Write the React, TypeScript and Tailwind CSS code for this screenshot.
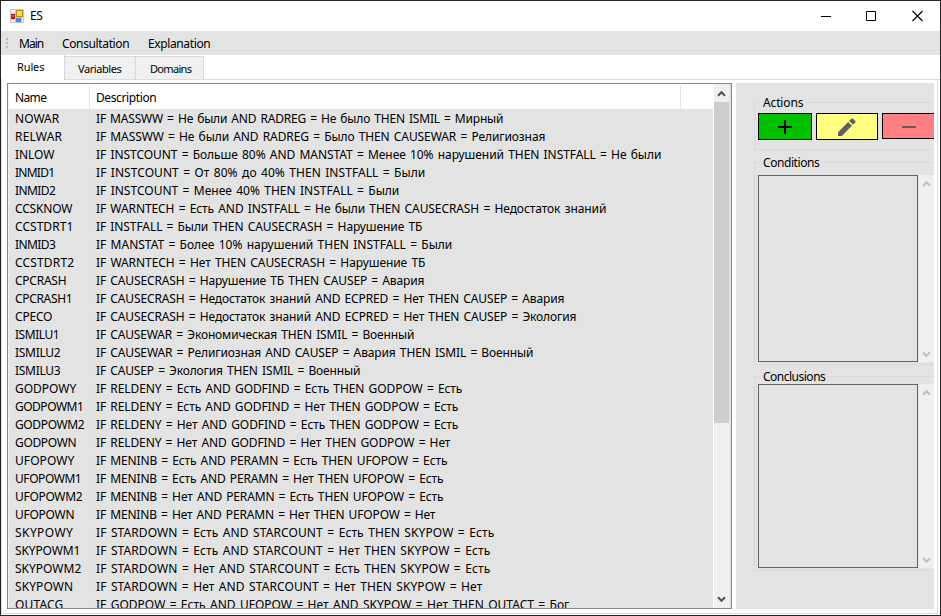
import { useLayoutEffect, useRef, useState } from "react";

type Rule = [name: string, nameWidth: number, description: string, descriptionWidth: number];

const rules: Rule[] = [
  ["NOWAR", 44, "IF MASSWW = Не были AND RADREG = Не было THEN ISMIL = Мирный", 407],
  ["RELWAR", 47, "IF MASSWW = Не были AND RADREG = Было THEN CAUSEWAR = Религиозная", 449],
  ["INLOW", 39, "IF INSTCOUNT = Больше 80% AND MANSTAT = Менее 10% нарушений THEN INSTFALL = Не были", 565],
  ["INMID1", 39, "IF INSTCOUNT = От 80% до 40% THEN INSTFALL = Были", 329],
  ["INMID2", 40, "IF INSTCOUNT = Менее 40% THEN INSTFALL = Были", 303],
  ["CCSKNOW", 57, "IF WARNTECH = Есть AND INSTFALL = Не были THEN CAUSECRASH = Недостаток знаний", 510],
  ["CCSTDRT1", 58, "IF INSTFALL = Были THEN CAUSECRASH = Нарушение ТБ", 326],
  ["INMID3", 40, "IF MANSTAT = Более 10% нарушений THEN INSTFALL = Были", 356],
  ["CCSTDRT2", 59, "IF WARNTECH = Нет THEN CAUSECRASH = Нарушение ТБ", 329],
  ["CPCRASH", 51, "IF CAUSECRASH = Нарушение ТБ THEN CAUSEP = Авария", 328],
  ["CPCRASH1", 57, "IF CAUSECRASH = Недостаток знаний AND ECPRED = Нет THEN CAUSEP = Авария", 468],
  ["CPECO", 37, "IF CAUSECRASH = Недостаток знаний AND ECPRED = Нет THEN CAUSEP = Экология", 480],
  ["ISMILU1", 44, "IF CAUSEWAR = Экономическая THEN ISMIL = Военный", 318],
  ["ISMILU2", 45, "IF CAUSEWAR = Религиозная AND CAUSEP = Авария THEN ISMIL = Военный", 437],
  ["ISMILU3", 45, "IF CAUSEP = Экология THEN ISMIL = Военный", 264],
  ["GODPOWY", 61, "IF RELDENY = Есть AND GODFIND = Есть THEN GODPOW = Есть", 366],
  ["GODPOWM1", 68, "IF RELDENY = Есть AND GODFIND = Нет THEN GODPOW = Есть", 362],
  ["GODPOWM2", 69, "IF RELDENY = Нет AND GODFIND = Есть THEN GODPOW = Есть", 362],
  ["GODPOWN", 61, "IF RELDENY = Нет AND GODFIND = Нет THEN GODPOW = Нет", 354],
  ["UFOPOWY", 59, "IF MENINB = Есть AND PERAMN = Есть THEN UFOPOW = Есть", 351],
  ["UFOPOWM1", 66, "IF MENINB = Есть AND PERAMN = Нет THEN UFOPOW = Есть", 347],
  ["UFOPOWM2", 67, "IF MENINB = Нет AND PERAMN = Есть THEN UFOPOW = Есть", 347],
  ["UFOPOWN", 59, "IF MENINB = Нет AND PERAMN = Нет THEN UFOPOW = Нет", 339],
  ["SKYPOWY", 58, "IF STARDOWN = Есть AND STARCOUNT = Есть THEN SKYPOW = Есть", 398],
  ["SKYPOWM1", 65, "IF STARDOWN = Есть AND STARCOUNT = Нет THEN SKYPOW = Есть", 394],
  ["SKYPOWM2", 66, "IF STARDOWN = Нет AND STARCOUNT = Есть THEN SKYPOW = Есть", 394],
  ["SKYPOWN", 58, "IF STARDOWN = Нет AND STARCOUNT = Нет THEN SKYPOW = Нет", 386],
  ["OUTACG", 48, "IF GODPOW = Есть AND UFOPOW = Нет AND SKYPOW = Нет THEN OUTACT = Бог", 473],
];

/** A text run whose tracking is adjusted so that it spans the given width. */
function Label({ text, width }: { text: string; width: number }) {
  const ref = useRef<HTMLSpanElement>(null);
  const [spacing, setSpacing] = useState(0);
  useLayoutEffect(() => {
    const el = ref.current;
    if (!el) return;
    el.style.letterSpacing = "0px";
    setSpacing((width + 0.3 - el.getBoundingClientRect().width) / text.length);
  }, [text, width]);
  return (
    <span ref={ref} className="inline-block whitespace-pre [word-spacing:1.2px]" style={{ letterSpacing: `${spacing}px` }}>
      {text}
    </span>
  );
}

function Chevron({ down = false, color }: { down?: boolean; color: string }) {
  return (
    <svg width="9" height="7" viewBox="0 0 9 7" fill="none" stroke={color} strokeWidth="2">
      <path d={down ? "M1 1.3 4.5 4.8 8 1.3" : "M1 5.7 4.5 2.2 8 5.7"} />
    </svg>
  );
}

function Group({ title, width, className, children }: { title: string; width: number; className: string; children: React.ReactNode }) {
  return (
    <section className={`relative w-[180px] border border-r-0 border-[#dadada] ${className}`}>
      <h2 className="absolute -top-[9px] left-[6px] h-[18px] bg-[#e3e3e3] px-[2px] leading-[18px]">
        <Label text={title} width={width} />
      </h2>
      {children}
    </section>
  );
}

function EmptyList() {
  return (
    <div className="relative flex h-full">
      <div className="w-[160px] border border-[#646464]" />
      <div className="ml-px flex flex-1 flex-col items-center justify-between bg-[#f0f0f0] pt-[5px] pb-[4px]">
        <Chevron color="#bfbfbf" />
        <Chevron down color="#bfbfbf" />
      </div>
    </div>
  );
}

export default function App() {
  return (
    <div className="flex h-[616px] w-[941px] flex-col overflow-hidden border border-[#252525] bg-white font-['Noto_Sans','DejaVu_Sans',sans-serif] text-[12px] text-black">
      <header className="flex h-[30px] shrink-0 items-center pl-[9px]">
        <svg width="14" height="14" viewBox="0 0 14 14">
          <rect width="14" height="14" fill="#c9c9c9" />
          <path d="M1 1h4v3H1zM1 11h4v2H1zM12 9h1v4h-1z" fill="#f4f4f4" />
          <rect x="1" y="5" width="4" height="5" fill="#b01c1c" />
          <rect x="2" y="6" width="2" height="2" fill="#e06058" />
          <rect x="6.5" y="1.5" width="6" height="6" fill="#ffd75a" stroke="#c08a10" />
          <rect x="6" y="9" width="5" height="4" fill="#4a86e0" />
        </svg>
        <span className="ml-[6px]"><Label text="ES" width={12} /></span>
        <svg className="ml-auto mr-[17px]" width="102" height="12" viewBox="0 0 102 12" fill="none" stroke="#000">
          <path d="M0 6.500h10M45.500 1.500h9v9h-9z" />
          <path d="M91.500 1l10 10M101.500 1l-10 10" strokeWidth="1.15" />
        </svg>
      </header>

      <nav className="flex h-[24px] shrink-0 items-center bg-[#e3e3e3] pl-[5px]">
        <div className="flex w-[2px] flex-col gap-[2px]">
          <i className="h-[2px] bg-[#b8b8b8]" />
          <i className="h-[2px] bg-[#b8b8b8]" />
          <i className="h-[2px] bg-[#b8b8b8]" />
        </div>
        <span className="ml-[11px] w-[43px] pt-[2px]"><Label text="Main" width={24} /></span>
        <span className="w-[86px] pt-[2px]"><Label text="Consultation" width={67} /></span>
        <span className="pt-[2px]"><Label text="Explanation" width={62} /></span>
      </nav>

      <div className="flex h-[25px] shrink-0 items-end border-b border-[#dcdcdc] pl-px text-[11px]">
        <div className="-mb-px h-[25px] w-[63px] border-r border-[#d9d9d9] bg-white pl-[15px] leading-[24px]"><Label text="Rules" width={27} /></div>
        <div className="h-[23px] w-[71px] border-t border-r border-[#d9d9d9] bg-[#f0f0f0] pl-[13px] leading-[23px]"><Label text="Variables" width={43} /></div>
        <div className="h-[23px] w-[68px] border-t border-r border-[#d9d9d9] bg-[#f0f0f0] pl-[14px] leading-[23px]"><Label text="Domains" width={41} /></div>
      </div>

      <main className="mr-[2px] mb-px ml-0 flex min-h-0 flex-1 border-r border-b border-l border-[#dcdcdc] pt-[3px] pl-[5px]">
        <div className="flex h-[526px] w-[725px] border border-[#828790] bg-[#e3e3e3]">
          <div className="flex w-[705px] flex-col overflow-hidden border-l border-[#f0f0f0]">
            <div className="flex h-[25px] shrink-0 items-center bg-white pt-[2px]">
              <span className="flex h-full w-[81px] items-center border-r border-[#e3e3e3] pl-[6px]"><Label text="Name" width={31} /></span>
              <span className="flex h-full w-[591px] items-center border-r border-[#e3e3e3] pl-[6px]"><Label text="Description" width={60} /></span>
            </div>
            {rules.map(([name, nameWidth, description, descriptionWidth]) => (
              <div key={name} className="flex h-[18px] shrink-0 pl-[6px] leading-[19px]">
                <span className="w-[81px]"><Label text={name} width={nameWidth} /></span>
                <Label text={description} width={descriptionWidth} />
              </div>
            ))}
          </div>
          <div className="flex w-[16px] flex-col items-center border-l border-white bg-[#f0f0f0]">
            <div className="flex h-[18px] items-center"><Chevron color="#505050" /></div>
            <div className="h-[321px] w-full bg-[#cdcdcd]" />
            <div className="mt-auto flex h-[18px] items-center"><Chevron down color="#505050" /></div>
          </div>
        </div>

        <aside className="ml-[4px] h-[526px] w-[198px] overflow-hidden bg-[#e3e3e3] pt-[19px] pl-[18px]">
          <Group title="Actions" width={40} className="h-[48px] pt-[10px] pl-[3px]">
            <div className="flex gap-[4px]">
              <button className="flex h-[27px] w-[54px] shrink-0 items-start justify-center border border-black bg-[#00c000] pt-[6px]">
                <svg width="14" height="14" viewBox="0 0 14 14" stroke="#000" strokeWidth="2"><path d="M0 7h14M7 0v14" /></svg>
              </button>
              <button className="flex h-[27px] w-[62px] shrink-0 items-start justify-center border border-black bg-[#ffff80] pt-[4px]">
                <svg width="18" height="18" viewBox="0 0 18 18" fill="#606060"><path d="M0 14.200V18h3.800L14 7.800 10.200 4zM11.200 3 13.500.7q.8-.8 1.600 0L17.300 2.900q.8.8 0 1.600L15 6.800z" /></svg>
              </button>
              <button className="flex h-[26px] w-[60px] shrink-0 items-start border border-black bg-[#ff8080] pt-[12px] pl-[19px]">
                <svg width="14" height="2"><path d="M0 1h14" stroke="#606060" strokeWidth="2" /></svg>
              </button>
            </div>
          </Group>
          <Group title="Conditions" width={56} className="mt-[12px] h-[203px] pt-[12px] pb-[2px] pl-[3px]"><EmptyList /></Group>
          <Group title="Conclusions" width={62} className="mt-[11px] h-[195px] pt-[7px] pb-[2px] pl-[3px]"><EmptyList /></Group>
        </aside>
      </main>
    </div>
  );
}
